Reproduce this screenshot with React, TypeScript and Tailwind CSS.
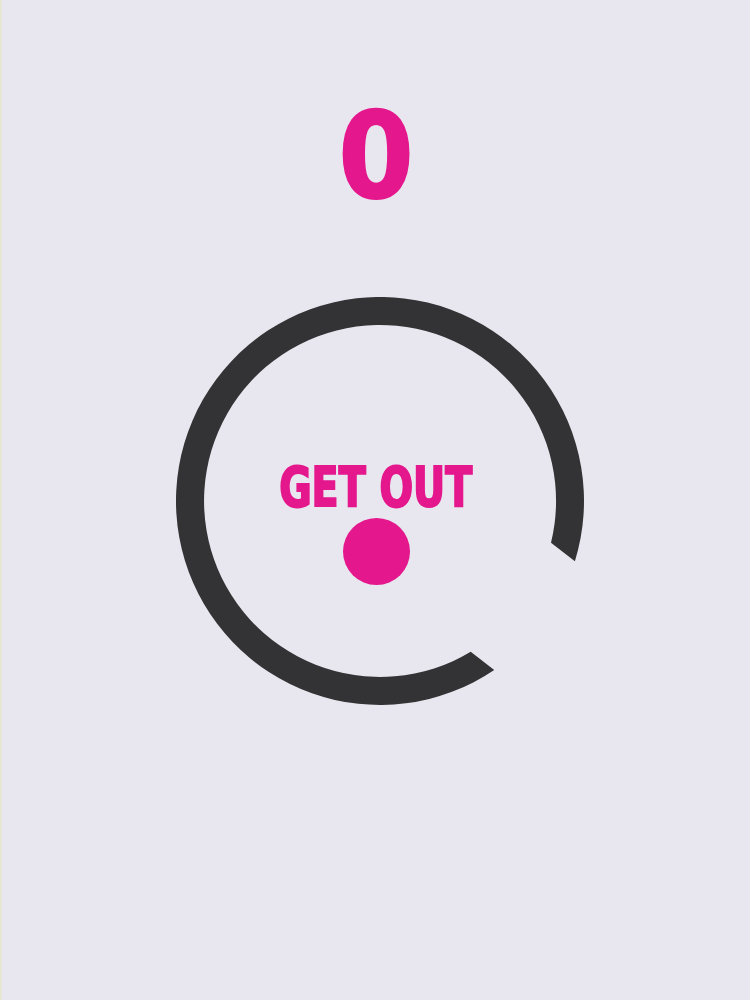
/**
 * GetOut game screen
 *
 * - Score at the top
 * - Open ring with a gap on the lower right
 * - "GET OUT" label and the ball inside the ring
 */

const MAGENTA = '#e4178d';
const RING = '#333335';

function Ring() {
  // ring centre (204,204), outer r 204, inner r 176,
  // gap on the lower right, both ends cut on a slant
  return (
    <svg
      className="absolute inset-0"
      width={408}
      height={408}
      viewBox="0 0 408 408"
      fill="none"
    >
      <path
        d="M318.2 373.0 A204 204 0 1 1 398.9 264.2 L375.0 245.8 A176 176 0 1 0 294.7 354.8 Z"
        fill={RING}
      />
    </svg>
  );
}

export default function App() {
  const score = 0;

  return (
    <div className="h-[1000px] w-full bg-[#e8e6ee] border-l-2 border-[#e6e8d4] flex flex-col items-center font-['DejaVu_Sans_Condensed','DejaVu_Sans',sans-serif]">
      {/* Score */}
      <div
        className="mt-[96px] h-[120px] text-[120px] leading-none font-bold [-webkit-text-stroke:2px_#e4178d]"
        style={{ color: MAGENTA }}
      >
        {score}
      </div>

      {/* Play field */}
      <div className="relative mt-[81px] ml-[8px] w-[408px] h-[408px]">
        <Ring />
        <div className="absolute inset-0 flex flex-col items-center pt-[163px] pr-[8px]">
          <div
            className="h-[55px] text-[55px] leading-none font-bold whitespace-nowrap scale-x-[0.8] [-webkit-text-stroke:2px_#e4178d]"
            style={{ color: MAGENTA }}
          >
            GET OUT
          </div>
          <div
            className="mt-[3px] w-[67px] h-[67px] rounded-full"
            style={{ backgroundColor: MAGENTA }}
          />
        </div>
      </div>
    </div>
  );
}
